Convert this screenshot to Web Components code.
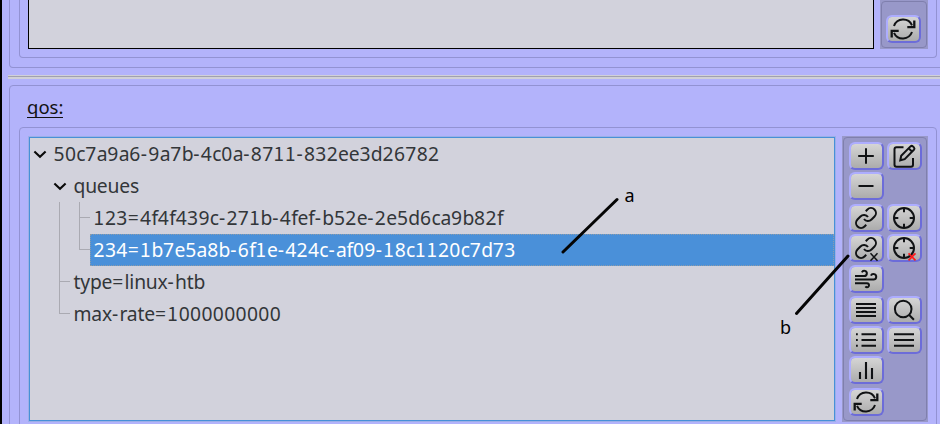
<!DOCTYPE html>
<html lang="en">
<head>
<meta charset="utf-8">
<title>qos</title>
<style>
html,body{margin:0;padding:0}
body{width:940px;height:424px;overflow:hidden;background:#b3b3fb;font-family:"Noto Sans","Noto Sans CJK SC",sans-serif;font-size:19.300px;color:#333639}
</style>
</head>
<body>
<qos-window></qos-window>
<script>
const ICONS = {
  plus: '<path d="M16 9.200v15.600M8.200 17h15.600"/>',
  minus: '<path d="M8.500 17h15"/>',
  edit: '<path d="M15.500 8.300H8.500q-2 0-2 2v15.500q0 2 2 2H23q2 0 2-2V19"/><path d="M12.300 21.300l.9-4.600L22.500 7.400q1.200-1.100 2.400 0l1 1q1.100 1.200 0 2.400l-9.200 9.300zM20.700 9.300l3.400 3.400"/>',
  link: '<path transform="translate(4 5)" d="M10 13a5 5 0 0 0 7.540.540l3-3a5 5 0 0 0-7.070-7.070l-1.720 1.710M14 11a5 5 0 0 0-7.540-.540l-3 3a5 5 0 0 0 7.070 7.070l1.710-1.710"/>',
  target: '<circle cx="16" cy="17" r="10"/><path d="M16 7v4.300M16 22.700v4.300M6 17h4.300M21.700 17h4.300"/>',
  wind: '<path d="M5 14h9.300a2.600 2.600 0 1 0-2.400-3.700M5 17.600h18.500a2.800 2.800 0 1 0-2.600-4M5 21.200h12a2 2 0 1 1-1.600 3.200"/>',
  lines4: '<path d="M6 11h20M6 15h20M6 19h20M6 23h20" stroke-width="2"/>',
  search: '<circle cx="15.200" cy="16" r="8.300"/><path d="M21.200 22l4.700 4.700"/>',
  list: '<path d="M11.500 11.200h14.500M11.500 17h14.500M11.500 22.800h14.500M6 11.200h1.800M6 17h1.800M6 22.800h1.800" stroke-width="2"/>',
  lines3: '<path d="M6 11.200h20M6 17h20M6 22.800h20" stroke-width="2"/>',
  chart: '<path d="M10 19v7M16 9v17M22 15v11" stroke-width="2.100"/>',
  refresh: '<path d="M7 14A9.700 9.700 0 0 1 25 13.300M25 20A9.700 9.700 0 0 1 7 20.800"/><path d="M27.300 8.500v6.600h-7M4.700 25.500v-6.600h7" stroke-width="2.300"/>'
};
ICONS.unlink = ICONS.link + '<path d="M20.500 22.300l7 7.400M27.500 22.300l-7 7.400" stroke-width="1.500"/>';
ICONS.untarget = ICONS.target + '<path d="M20.500 22.300l7 7M27.500 22.300l-7 7" stroke="#ff1919" stroke-width="1.700"/>';

class Base extends HTMLElement {
  connectedCallback() {
    if (!this.shadowRoot) this.attachShadow({mode: 'open'}).innerHTML = this.view();
  }
}
customElements.define('tool-button', class extends Base {
  view() {
    return `<style>
:host{display:block;box-sizing:border-box;width:35px;height:28px;border:2px solid;border-color:#adadff #6c6cd9 #6c6cd9 #adadff;border-radius:6px;background:linear-gradient(#d5d5d5,#acacac);background-clip:padding-box}
svg{display:block;width:32px;height:34px;margin:-5px 0 0 -1px;overflow:visible;fill:none;stroke:#101214;stroke-width:2}
</style><svg viewBox="0 0 32 34">${ICONS[this.getAttribute('icon')]}</svg>`;
  }
});
customElements.define('tool-bar', class extends Base {
  view() {
    return `<style>
:host{display:block;box-sizing:border-box;width:86px;background:#9898c9;padding:1px}
div{box-sizing:border-box;height:100%;border:1px solid #7f7fad;border-radius:4px;padding:var(--pad,4px 0 0 5px);display:grid;grid-template-columns:38px 38px;grid-template-rows:var(--rows,30px);align-content:start}
</style><div><slot></slot></div>`;
  }
});
customElements.define('frame-box', class extends Base {
  view() {
    return `<style>:host{display:block;box-sizing:border-box;border:1px solid #9292d3;border-radius:4px}</style><slot></slot>`;
  }
});
customElements.define('tree-branch', class extends Base {
  view() {
    return `<style>
:host{display:grid;grid-template-columns:20px 1fr}
.guide{background:linear-gradient(#aaaab2,#aaaab2) 9px 0/1px 100% no-repeat,linear-gradient(#aaaab2,#aaaab2) 9px 15px/11px 1px no-repeat}
:host([through]) .guide{background:linear-gradient(#aaaab2,#aaaab2) 9px 0/1px 100% no-repeat}
:host([last]) .guide{background:linear-gradient(#aaaab2,#aaaab2) 9px 0/1px 16px no-repeat,linear-gradient(#aaaab2,#aaaab2) 9px 15px/11px 1px no-repeat}
</style><span class="guide"></span><slot></slot>`;
  }
});
customElements.define('tree-item', class extends Base {
  view() {
    const label = this.getAttribute('label')
      .replace(/1|[02-9]+|[-=]/g, s => `<span class="${s === '1' ? 'one' : /\d/.test(s) ? 'digits' : 'sign'}">${s}</span>`);
    return `<style>
:host{display:block}
.row{display:flex;height:32px}
.label{flex:1;white-space:pre;line-height:31px;padding-left:3.500px;letter-spacing:-.2px}
.digits{letter-spacing:.35px}
.one{font:19px/0 "Noto Sans CJK SC",sans-serif;letter-spacing:.85px}
.sign{letter-spacing:1.300px}
:host([selected]) .label{background:#4a90d9;color:#fff;outline:1px dotted #8c9ba9;outline-offset:-1px}
svg{width:20px;height:32px;flex:none;fill:none;stroke:#090909;stroke-width:2.100}
</style><div class="row">${this.hasAttribute('open') ? '<svg viewBox="0 0 20 32"><path d="M4.400 13.500l5.600 5.200 5.600-5.200"/></svg>' : ''}<div class="label">${label}</div></div><slot></slot>`;
  }
});
customElements.define('call-out', class extends Base {
  view() {
    return `<style>
:host{position:absolute;inset:0;pointer-events:none}
svg{display:block}text{font:18px "Noto Sans",sans-serif;fill:#000}path{stroke:#050505;stroke-width:3;stroke-linecap:round}
</style><svg width="938" height="424"><path d="M561 252L615 199.500M794.500 313.500L846 256"/><text x="622.500" y="202">a</text><text x="778" y="334">b</text></svg>`;
  }
});
customElements.define('qos-window', class extends Base {
  view() {
    return `<style>
:host{display:block;position:relative;width:940px;height:424px;box-sizing:border-box;border-left:2px solid #000;overflow:hidden;padding-left:7px}
.upper{height:68px;width:940px;border-top:0;border-radius:0 0 4px 4px;padding:0 0 0 9px}
.upper-in{height:58px;width:918px;border-top:0;border-radius:0 0 4px 4px;display:flex;padding-left:8px}
.blank{box-sizing:border-box;width:846px;height:49px;border:1px solid #000;border-top:0;background:#d2d2dc}
.upper tool-bar{width:48px;height:49px;margin-left:6px;--pad:13px 0 0 4px}
.split{height:4px;margin:7px 0 6px -1px;background:linear-gradient(#d0d0d8 25%,#a0a0b0 25% 50%,#d0d0d8 50%)}
.lower{height:400px;width:940px;padding-left:9px}
.name{height:41px;padding-left:8px;box-sizing:border-box;padding-top:10px;display:flex;align-items:flex-start}
.name span{line-height:21px;height:21px;border-bottom:1px solid #111;font-family:"Noto Sans",sans-serif;font-size:18.500px;color:#111}
.lower-in{height:400px;width:918px;display:flex;padding:8px 0 0 8px;align-items:flex-start}
.tree{box-sizing:border-box;border:1px solid #4790d8;outline:1px solid #9bafe8;margin:1px 0 0 1px;background:#d2d2dc;width:806px;height:284px}
.lower tool-bar{height:286px;margin-left:7px;--rows:30px 32px 30px 31px 31px 30px 30px 32px 30px}
.sub{display:block;margin-left:20px}
</style>
<frame-box class="upper"><frame-box class="upper-in"><div class="blank"></div><tool-bar><tool-button icon="refresh"></tool-button></tool-bar></frame-box></frame-box>
<div class="split"></div>
<frame-box class="lower"><div class="name"><span>qos:</span></div>
<frame-box class="lower-in"><div class="tree">
<tree-item open label="50c7a9a6-9a7b-4c0a-8711-832ee3d26782">
 <div class="sub">
  <tree-item open label="queues"></tree-item>
  <tree-branch through><div class="inner">
   <tree-branch><tree-item label="123=4f4f439c-271b-4fef-b52e-2e5d6ca9b82f"></tree-item></tree-branch>
   <tree-branch last><tree-item selected label="234=1b7e5a8b-6f1e-424c-af09-18c1120c7d73"></tree-item></tree-branch>
  </div></tree-branch>
  <tree-branch><tree-item label="type=linux-htb"></tree-item></tree-branch>
  <tree-branch last><tree-item label="max-rate=1000000000"></tree-item></tree-branch>
 </div>
</tree-item>
</div>
<tool-bar><tool-button icon="plus"></tool-button><tool-button icon="edit"></tool-button><tool-button icon="minus"></tool-button><i></i><tool-button icon="link"></tool-button><tool-button icon="target"></tool-button><tool-button icon="unlink"></tool-button><tool-button icon="untarget"></tool-button><tool-button icon="wind"></tool-button><i></i><tool-button icon="lines4"></tool-button><tool-button icon="search"></tool-button><tool-button icon="list"></tool-button><tool-button icon="lines3"></tool-button><tool-button icon="chart"></tool-button><i></i><tool-button icon="refresh"></tool-button></tool-bar>
</frame-box></frame-box>
<call-out></call-out>`;
  }
});
</script>
</body>
</html>
